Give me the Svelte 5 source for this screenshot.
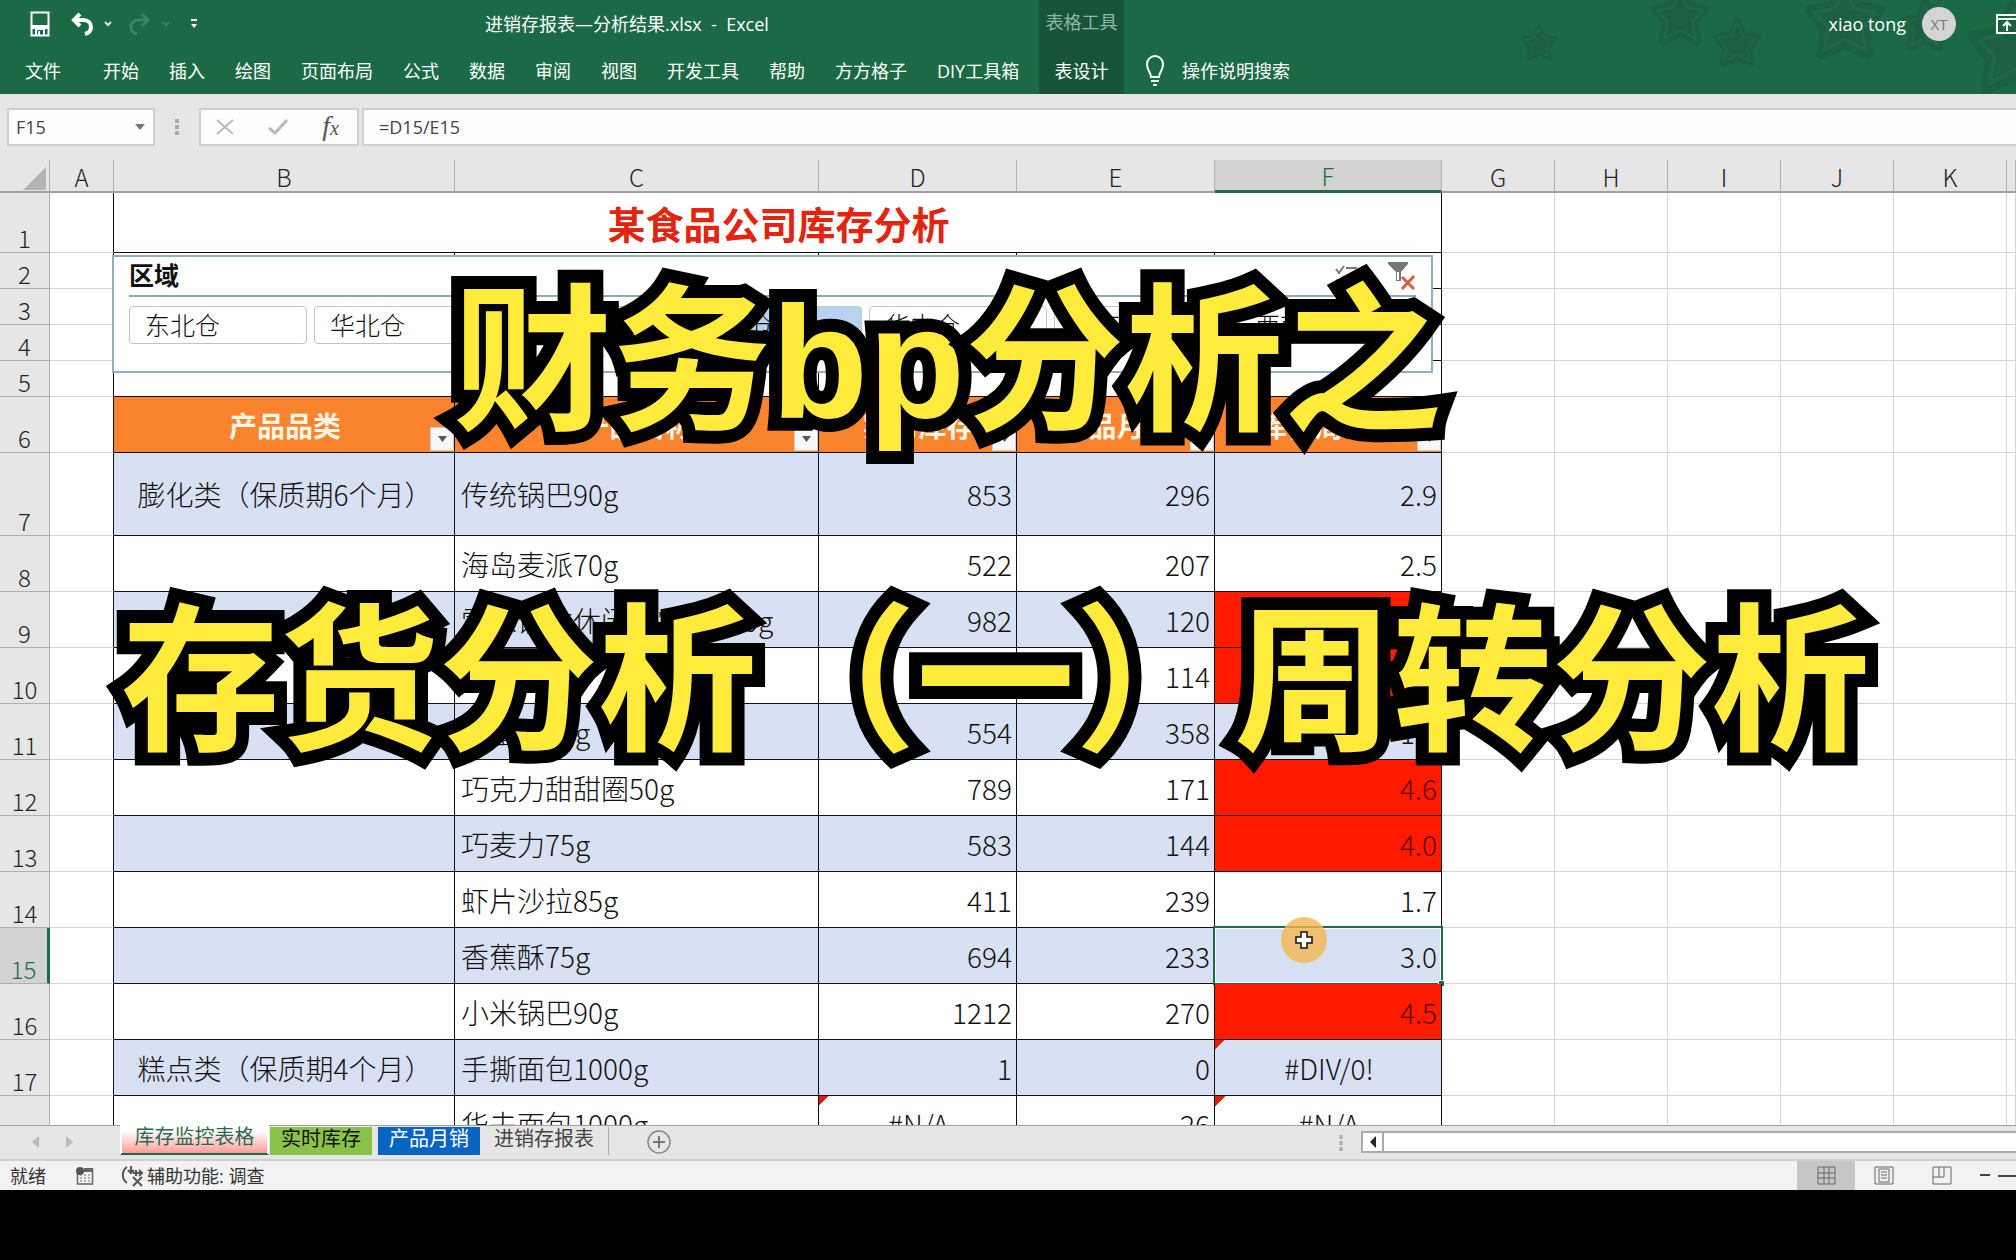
<script lang="ts">
	type Row = {
		n: number;
		size?: 'tall' | 'short';
		kind?: string;
		name: string;
		stock: string;
		sales: string;
		turn: string;
		alert?: boolean;
	};

	const menus = ['开始', '插入', '绘图', '页面布局', '公式', '数据', '审阅', '视图', '开发工具', '帮助', '方方格子', 'DIY工具箱'];
	const columns = ['A', 'B', 'C', 'D', 'E', 'F', 'G', 'H', 'I', 'J', 'K', ''];
	const blanks = [0, 1, 2, 3, 4, 5];
	const headings = ['产品品类', '产品名称', '实时库存', '产品月销', '库存周转率'];
	const regions = ['东北仓', '华北仓', '西北仓', '华东仓', '华中仓', '华南仓', '西南仓'];

	const rows: Row[] = [
		{ n: 7, size: 'tall', kind: '膨化类（保质期6个月）', name: '传统锅巴90g', stock: '853', sales: '296', turn: '2.9' },
		{ n: 8, name: '海岛麦派70g', stock: '522', sales: '207', turn: '2.5' },
		{ n: 9, name: '雪米饼本休闲小零食100g', stock: '982', sales: '120', turn: '8.2', alert: true },
		{ n: 10, name: '薯片80g', stock: '463', sales: '114', turn: '4.1', alert: true },
		{ n: 11, name: '虾蟹酥75g', stock: '554', sales: '358', turn: '1.5' },
		{ n: 12, name: '巧克力甜甜圈50g', stock: '789', sales: '171', turn: '4.6', alert: true },
		{ n: 13, name: '巧麦力75g', stock: '583', sales: '144', turn: '4.0', alert: true },
		{ n: 14, name: '虾片沙拉85g', stock: '411', sales: '239', turn: '1.7' },
		{ n: 15, name: '香蕉酥75g', stock: '694', sales: '233', turn: '3.0' },
		{ n: 16, name: '小米锅巴90g', stock: '1212', sales: '270', turn: '4.5', alert: true },
		{ n: 17, kind: '糕点类（保质期4个月）', name: '手撕面包1000g', stock: '1', sales: '0', turn: '#DIV/0!' },
		{ n: 18, name: '华夫面包1000g', stock: '#N/A', sales: '26', turn: '#N/A' }
	];

	// x, y, scale
	const stars = [
		[39, 43, 17],
		[180, 16, 28],
		[237, 43, 23],
		[345, 20, 38],
		[425, 26, 24],
		[514, 48, 44]
	];

	let selected = $state('华东仓');
	let cell = $state('F15');
	let formula = $state('=D15/E15');

	const isError = (v: string) => v.startsWith('#');
</script>

<div class="app">
	<header class="ribbon">
		<svg class="stars" viewBox="0 0 516 94" width="516" height="94" aria-hidden="true">
			{#each stars as [x, y, s]}
				<g transform="translate({x} {y}) scale({s / 20})">
					<path class="halo" d="M0-19 6-7 18-5 10 5 12 18 0 12-12 18-10 5-18-5-6-7Z" />
					<path class="star" d="M0-17 5-6 16-4 9 4 11 16 0 10-11 16-9 4-16-4-5-6Z" />
				</g>
			{/each}
		</svg>

		<div class="top">
			<div class="quick">
				<button aria-label="保存">
					<svg width="20" height="26" viewBox="0 0 20 26"><path d="M1.5 1.5h17v23h-17zM6 24v-6h8v6M9 20v4" fill="none" stroke="#fff" stroke-width="2" /><path d="M2 14h16v4H2z" fill="#fff" /></svg>
				</button>
				<button aria-label="撤消">
					<svg width="22" height="24" viewBox="0 0 22 24"><path d="M9 2 3 8l6 6M4 8h8c5 0 8 3 8 7s-2 6-6 7" fill="none" stroke="#fff" stroke-width="4" /></svg>
				</button>
				<svg width="8" height="6" viewBox="0 0 8 6"><path d="m1 1 3 3 3-3" fill="none" stroke="#d5e5dc" stroke-width="2" /></svg>
				<button class="off" aria-label="恢复">
					<svg width="22" height="24" viewBox="0 0 22 24"><path d="m13 2 6 6-6 6M18 8h-8c-5 0-8 3-8 7s2 6 6 7" fill="none" stroke="#3c8462" stroke-width="3" /></svg>
				</button>
				<svg width="8" height="6" viewBox="0 0 8 6"><path d="m1 1 3 3 3-3" fill="none" stroke="#3c8462" stroke-width="2" /></svg>
				<button class="more" aria-label="自定义快速访问工具栏">
					<svg width="6" height="10" viewBox="0 0 6 10"><path d="M0 1h6" stroke="#fff" stroke-width="2" /><path d="M0 5h6L3 9z" fill="#fff" /></svg>
				</button>
			</div>
			<span class="title">进销存报表—分析结果.xlsx&nbsp; - &nbsp;Excel</span>
		</div>

		<div class="context">
			<span class="group">表格工具</span>
			<button>表设计</button>
		</div>

		<div class="account">
			<span>xiao tong</span>
			<span class="avatar">XT</span>
			<button aria-label="功能区显示选项">
				<svg width="22" height="20" viewBox="0 0 22 20"><path d="M1 1h20v18H1zM1 5h20M11 17V8M7 12l4-4 4 4" fill="none" stroke="#fff" stroke-width="2" /></svg>
			</button>
		</div>

		<nav class="menus">
			<button class="file">文件</button>
			{#each menus as m}
				<button>{m}</button>
			{/each}
		</nav>

		<button class="tell">
			<svg width="18" height="32" viewBox="0 0 18 32"><path d="M5 22c0-5-4-6-4-13a8 8 0 0 1 16 0c0 7-4 8-4 13zM5 26h8M7 30h4" fill="none" stroke="#fff" stroke-width="2" /></svg>
			操作说明搜索
		</button>
	</header>

	<div class="formula-bar">
		<label class="name-box">
			<input aria-label="名称框" bind:value={cell} />
			<svg width="10" height="6" viewBox="0 0 10 6"><path d="M0 0h10L5 6z" fill="#777" /></svg>
		</label>
		<svg class="grip" width="4" height="18" viewBox="0 0 4 18"><path d="M2 1v4M2 7v4M2 13v4" stroke="#aaa" stroke-width="4" /></svg>
		<div class="fx">
			<button aria-label="取消"><svg width="18" height="16" viewBox="0 0 18 16"><path d="m1 1 16 14M17 1 1 15" stroke="#bbb" stroke-width="2" /></svg></button>
			<button aria-label="输入"><svg width="20" height="16" viewBox="0 0 20 16"><path d="m1 9 6 5L19 1" fill="none" stroke="#bbb" stroke-width="3" /></svg></button>
			<button class="fn" aria-label="插入函数"><i>f<small>x</small></i></button>
		</div>
		<input class="formula" aria-label="编辑栏" bind:value={formula} />
	</div>

	<main class="sheet">
		<table>
			<colgroup>
				<col class="w-n" /><col class="w-a" /><col class="w-b" /><col class="w-c" /><col class="w-d" /><col class="w-d" /><col class="w-f" />
				<col class="w-g" /><col class="w-g" /><col class="w-g" /><col class="w-g" /><col class="w-g" /><col />
			</colgroup>
			<thead>
				<tr>
					<th class="corner"><svg width="23" height="23" viewBox="0 0 23 23"><path d="M23 0v23H0z" fill="#b4b4b4" /></svg></th>
					{#each columns as c}
						<th class:active={c === 'F'}>{c}</th>
					{/each}
				</tr>
			</thead>
			<tbody>
				<tr class="r-title">
					<th>1</th>
					<td class="edge"></td>
					<td class="k main-title" colspan="5">某食品公司库存分析</td>
					{#each blanks as _}<td></td>{/each}
				</tr>
				{#each [2, 3, 4, 5] as n}
					<tr class="r-short">
						<th>{n}</th>
						<td class="edge"></td>
						{#each headings as _}<td class="k"></td>{/each}
						{#each blanks as _}<td></td>{/each}
					</tr>
				{/each}
				<tr class="r-normal head">
					<th>6</th>
					<td class="edge"></td>
					{#each headings as h}
						<td class="k">
							{h}
							<button aria-label="筛选 {h}"><svg width="9" height="6" viewBox="0 0 9 6"><path d="M0 0h9L4.500 6z" fill="#555" /></svg></button>
						</td>
					{/each}
					{#each blanks as _}<td></td>{/each}
				</tr>
				{#each rows as r}
					<tr class={r.size === 'tall' ? 'r-tall' : 'r-normal'} class:band={r.n % 2 === 1}>
						<th class:active={r.n === 15}>{r.n}</th>
						<td class="edge"></td>
						<td class="k mid">{r.kind ?? ''}</td>
						<td class="k">{r.name}</td>
						<td class="k num" class:err={isError(r.stock)}>{r.stock}</td>
						<td class="k num">{r.sales}</td>
						<td class="k num" class:err={isError(r.turn)} class:alert={r.alert} class:selected={r.n === 15}>
							{r.turn}
							{#if r.n === 15}
								<span class="frame"></span>
								<span class="pointer">
									<svg width="18" height="18" viewBox="0 0 18 18"><path d="M6 1h6v5h5v6h-5v5H6v-5H1V6h5z" fill="#fff" stroke="#111" stroke-width="1.500" /></svg>
								</span>
							{/if}
						</td>
						{#each blanks as _}<td></td>{/each}
					</tr>
				{/each}
			</tbody>
		</table>

		<section class="slicer">
			<div class="slicer-head">
				<strong>区域</strong>
				<svg width="24" height="24" viewBox="0 0 24 24"><path d="m2 5 3 4 5-7M12 4h11M2 16l3 3 5-7M12 17h11" fill="none" stroke="#777" stroke-width="2" /></svg>
				<svg width="28" height="28" viewBox="0 0 28 28"><path d="M0 0h20v2l-7 8v9H8v-9L0 2z" fill="#777" /><path d="M10 10v8" stroke="#fff" stroke-width="2" /><path d="m14 15 12 12M26 14 14 27" stroke="#d2623c" stroke-width="3" /></svg>
			</div>
			<div class="slicer-items">
				{#each regions as r}
					<button class:on={selected === r} onclick={() => (selected = r)}>{r}</button>
				{/each}
			</div>
		</section>
	</main>

	<footer>
		<div class="tabs">
			<div class="arrows">
				<svg width="8" height="12" viewBox="0 0 8 12"><path d="M7 0v12L0 6z" fill="#bbb" /></svg>
				<svg width="8" height="12" viewBox="0 0 8 12"><path d="M1 0v12l7-6z" fill="#bbb" /></svg>
			</div>
			<button class="tab current">库存监控表格</button>
			<button class="tab green">实时库存</button>
			<button class="tab blue">产品月销</button>
			<button class="tab plain">进销存报表</button>
			<button class="add" aria-label="新工作表">
				<svg width="24" height="24" viewBox="0 0 24 24"><circle cx="12" cy="12" r="11" fill="none" stroke="#888" stroke-width="1.500" /><path d="M12 6v12M6 12h12" stroke="#777" stroke-width="2" /></svg>
			</button>
			<svg class="grip" width="4" height="16" viewBox="0 0 4 16"><path d="M2 0v4M2 6v4M2 12v4" stroke="#aaa" stroke-width="3" /></svg>
			<div class="scroll">
				<button aria-label="向左滚动"><svg width="6" height="12" viewBox="0 0 6 12"><path d="M6 0v12L0 6z" fill="#222" /></svg></button>
			</div>
		</div>
		<div class="status">
			<span class="ready">就绪</span>
			<svg class="macro" width="18" height="18" viewBox="0 0 18 18"><path d="M1.500 4v13h15V2H8" fill="none" stroke="#666" stroke-width="1.500" /><path d="M8 1h9v4H8z" fill="#666" /><circle cx="4" cy="4" r="4" fill="#555" /><path d="M4 8h11M4 11h11M4 14h11" stroke="#777" stroke-dasharray="2 2" /></svg>
			<svg width="24" height="22" viewBox="0 0 24 22"><path d="M6 2C1 5 0 14 6 18M10 1v7M7 5l3 3 3-3M15 5v6M12 8h8M18 5l3 3-3 3M12 12l9 9M21 12l-9 9" fill="none" stroke="#555" stroke-width="2" /></svg>
			<span class="access">辅助功能: 调查</span>
			<div class="views">
				<button class="on" aria-label="普通"><svg width="19" height="19" viewBox="0 0 19 19"><path d="M1 1h17v17H1zM1 7h17M1 12h17M7 1v17M12 1v17" fill="none" stroke="#666" /></svg></button>
				<button aria-label="页面布局"><svg width="20" height="19" viewBox="0 0 20 19"><path d="M1 1h18v17H1zM5 3h10v13H5zM7 6h6M7 9h6M7 12h6" fill="none" stroke="#666" /></svg></button>
				<button aria-label="分页预览"><svg width="20" height="19" viewBox="0 0 20 19"><path d="M1 1h18v17H1zM1 11h11V1M7 1v10" fill="none" stroke="#666" /></svg></button>
				<svg width="36" height="4" viewBox="0 0 36 4"><path d="M0 1h10M18 2h18" stroke="#444" stroke-width="2" /></svg>
			</div>
		</div>
	</footer>

	<h1 class="caption">
		<span class="first">财务<b>bp</b>分析之</span>
		<span>存货分析（一）周转分析</span>
	</h1>
</div>

<style>
	:global(body) {
		margin: 0;
		background: #000;
	}
	.app {
		position: relative;
		display: flex;
		flex-direction: column;
		box-sizing: border-box;
		height: 100vh;
		padding-bottom: 70px;
		overflow: hidden;
		color: #222;
		font: 18px/24px 'Open Sans', 'Noto Sans CJK SC', sans-serif;
	}
	button,
	input {
		padding: 0;
		border: 0;
		background: none;
		color: inherit;
		font: inherit;
	}
	svg {
		display: block;
		flex: none;
	}

	/* ribbon */
	.ribbon {
		position: relative;
		display: grid;
		grid-template: 48px 46px / 1039px 85px 1fr;
		flex: none;
		background: #1c6a45;
		color: #fff;
	}
	.stars {
		position: absolute;
		top: 0;
		right: 0;
	}
	.stars path {
		fill: #1d5f41;
		stroke-linejoin: round;
		stroke-width: 4;
	}
	.stars .halo {
		stroke: #1b6040;
		stroke-width: 6;
	}
	.stars .star {
		stroke: #1f6845;
		stroke-width: 2;
	}
	.top,
	.quick,
	.menus,
	.tell,
	.account {
		display: flex;
		align-items: center;
	}
	.quick {
		width: 455px;
		padding-left: 30px;
		gap: 11px;
	}
	.quick button:nth-child(2) {
		margin-left: 10px;
	}
	.quick .off {
		margin-left: 6px;
	}
	.more {
		margin-left: 10px;
	}
	.title {
		white-space: pre;
	}
	.context {
		grid-row: 1 / 3;
		grid-column: 2;
		display: flex;
		flex-direction: column;
		align-items: center;
		background: #185538;
	}
	.group {
		padding: 10px 0 25px;
		color: #8fb8a3;
	}
	.account {
		position: relative;
		grid-row: 1;
		grid-column: 3;
		justify-content: flex-end;
	}
	.avatar {
		width: 34px;
		height: 34px;
		margin: 0 40px 0 16px;
		border-radius: 50%;
		background: #d4d4d4;
		color: #777;
		font-size: 15px;
		line-height: 34px;
		text-align: center;
	}
	.account button {
		margin-right: -2px;
	}
	.menus {
		grid-row: 2;
		grid-column: 1;
		padding-left: 10px;
	}
	.menus button {
		padding: 0 15px;
		white-space: nowrap;
	}
	.menus .file {
		margin-right: 12px;
	}
	.tell {
		grid-row: 2;
		grid-column: 3;
		gap: 18px;
		padding-left: 22px;
	}

	/* formula bar */
	.formula-bar {
		display: flex;
		align-items: center;
		flex: none;
		height: 66px;
		padding-left: 7px;
		background: #e6e6e6;
		color: #444;
	}
	.name-box,
	.fx,
	.formula {
		display: flex;
		align-items: center;
		box-sizing: border-box;
		height: 38px;
		border: 2px solid #cfcfcf;
		background: #fdfdfd;
	}
	.name-box {
		width: 148px;
		padding: 0 8px 0 7px;
	}
	.name-box input {
		flex: 1;
		min-width: 0;
	}
	.formula-bar .grip {
		margin: 0 20px;
	}
	.fx {
		width: 160px;
		justify-content: space-between;
		padding: 0 18px 0 15px;
	}
	.fn {
		font: 28px/30px 'Liberation Serif', serif;
		color: #555;
	}
	.fn small {
		font-size: 20px;
	}
	.formula {
		flex: 1;
		margin-left: 3px;
		padding-left: 15px;
		border-right: 0;
	}

	/* grid */
	.sheet {
		position: relative;
		flex: 1;
		min-height: 0;
		overflow: hidden;
		background: #fff;
	}
	table {
		width: 100%;
		table-layout: fixed;
		border-spacing: 0;
		font: 300 28px/36px 'Noto Sans CJK SC', sans-serif;
		color: #111;
	}
	.w-n { width: 50px; }
	.w-a { width: 64px; }
	.w-b { width: 341px; }
	.w-c { width: 364px; }
	.w-d { width: 198px; }
	.w-f { width: 227px; }
	.w-g { width: 113px; }
	th,
	td {
		box-sizing: border-box;
		padding: 0 4px;
		border: solid #d4d4d4;
		border-width: 0 1px 1px 0;
		white-space: nowrap;
	}
	th {
		padding: 0;
		border-color: #b0b0b0;
		background: #e6e6e6;
		color: #222;
		font-weight: 300;
		font-size: 24px;
		line-height: 28px;
	}
	thead th {
		height: 33px;
		padding-top: 2px;
		border-bottom: 2px solid #a0a0a0;
	}
	thead .active {
		border-bottom: 3px solid #1e6b47;
	}
	th.active {
		background: #d2d2d2;
		color: #1e6b47;
	}
	tbody th {
		vertical-align: bottom;
	}
	tbody th.active {
		border-right: 3px solid #1e6b47;
	}
	.corner svg {
		margin: 3px 0 0 23px;
	}
	.r-title { height: 60px; }
	.r-short { height: 36px; }
	.r-normal { height: 56px; }
	.r-tall { height: 83px; }
	.edge {
		border-right-color: #111;
	}
	.k {
		position: relative;
		padding-left: 6px;
		border-color: #111;
	}
	.main-title {
		color: #e3240f;
		font-size: 38px;
		font-weight: 700;
		line-height: 56px;
		text-align: center;
	}
	.head .k {
		background: #f9842d;
		color: #fff6e6;
		font-weight: 700;
		text-align: center;
	}
	.head button {
		position: absolute;
		right: 0;
		bottom: 1px;
		display: grid;
		place-items: center;
		width: 24px;
		height: 24px;
		border: 1px solid #ccc;
		background: #f8f8fb;
	}
	.band .k {
		background: #d8e0f3;
	}
	.mid {
		text-align: center;
	}
	.num {
		text-align: right;
	}
	tr .alert,
	.band .alert {
		background: #ff1a00;
		color: #5c0c06;
	}
	.err {
		text-align: center;
	}
	.err::before {
		content: '';
		position: absolute;
		top: 0;
		left: 0;
		width: 10px;
		height: 10px;
		background: linear-gradient(135deg, #e0200f 50%, transparent 50%);
	}
	.frame {
		position: absolute;
		inset: -2px -2px -2px -2px;
		border: 2px solid #1e6b47;
		box-shadow: inset 0 0 0 1px #fff;
	}
	.frame::after {
		content: '';
		position: absolute;
		right: -4px;
		bottom: -4px;
		width: 5px;
		height: 5px;
		border: 1px solid #fff;
		background: #1e6b47;
	}
	.pointer {
		position: absolute;
		top: -11px;
		left: 66px;
		display: grid;
		place-items: center;
		width: 46px;
		height: 46px;
		border-radius: 50%;
		background: #f5b54fcc;
	}

	/* slicer floats over the grid */
	.slicer {
		position: absolute;
		top: 95px;
		left: 112px;
		box-sizing: border-box;
		width: 1321px;
		height: 118px;
		padding: 0 15px;
		border: 2px solid #8fb0bf;
		background: #fff;
		color: #111;
		font: 300 25px/34px 'Noto Sans CJK SC', sans-serif;
	}
	.slicer-head {
		display: flex;
		align-items: center;
		gap: 30px;
		height: 38px;
		border-bottom: 2px solid #8fa9b8;
	}
	.slicer-head strong {
		flex: 1;
		padding-bottom: 4px;
		font-weight: 700;
	}
	.slicer-items {
		display: grid;
		grid-template-columns: repeat(7, 178px);
		gap: 7px;
		margin-top: 9px;
	}
	.slicer-items button {
		box-sizing: border-box;
		height: 38px;
		padding: 0 0 2px 15px;
		border: 1px solid #c4c4c4;
		border-radius: 4px;
		text-align: left;
	}
	.slicer-items .on {
		background: #b8d3ef;
	}

	/* sheet tabs and status bar */
	footer {
		flex: none;
	}
	.tabs {
		display: flex;
		align-items: flex-start;
		box-sizing: border-box;
		height: 34px;
		border-top: 1px solid #a0a0a0;
		background: #e6e6e6;
		color: #444;
		font-size: 20px;
	}
	.arrows {
		display: flex;
		gap: 25px;
		width: 88px;
		padding: 10px 0 0 32px;
	}
	.tab {
		box-sizing: border-box;
		height: 28px;
		margin-top: 1px;
		padding-bottom: 4px;
		line-height: 24px;
	}
	.current {
		width: 149px;
		margin-top: -1px;
		height: 30px;
		border: 2px solid #fff;
		border-top: 0;
		border-bottom: 2px solid #1e6b47;
		background: linear-gradient(#fff 20%, #ff9c98);
		color: #2b6b4c;
	}
	.green {
		width: 102px;
		margin-left: 1px;
		background: #8bc34a;
		color: #111;
	}
	.blue {
		width: 102px;
		margin-left: 6px;
		background: #0a64c2;
		color: #fff;
	}
	.plain {
		width: 129px;
		border-right: 1px solid #aaa;
	}
	.add {
		margin: 4px 0 0 38px;
	}
	.tabs .grip {
		margin: 9px 18px 0 auto;
	}
	.scroll {
		box-sizing: border-box;
		width: 655px;
		height: 22px;
		margin-top: 5px;
		border: 2px solid #aaa;
		border-right: 0;
		background: #fff;
	}
	.scroll button {
		display: grid;
		place-items: center;
		width: 21px;
		height: 18px;
		border-right: 2px solid #aaa;
	}
	.status {
		display: flex;
		align-items: center;
		box-sizing: border-box;
		height: 31px;
		padding-left: 10px;
		border-top: 2px solid #d0d0d0;
		background: #f2f2f2;
		color: #333;
	}
	.macro {
		margin: 0 27px 0 30px;
	}
	.access {
		padding-left: 2px;
	}
	.views {
		display: flex;
		align-items: center;
		margin-left: auto;
	}
	.views button {
		display: grid;
		place-items: center;
		width: 58px;
		height: 29px;
	}
	.views .on {
		background: #c6c6c6;
	}
	.views > svg {
		margin-left: 9px;
	}

	/* video caption */
	.caption {
		position: absolute;
		top: 189px;
		left: 121px;
		margin: 0;
		color: #ffeb3b;
		font: 700 159px/320px 'Noto Sans CJK SC', sans-serif;
		white-space: nowrap;
		-webkit-text-stroke: 26px #000;
		paint-order: stroke fill;
		pointer-events: none;
	}
	.caption span {
		display: block;
	}
	.caption .first {
		padding-left: 332px;
	}
	.caption b {
		font-family: 'Liberation Sans', sans-serif;
		line-height: 1;
	}
</style>
